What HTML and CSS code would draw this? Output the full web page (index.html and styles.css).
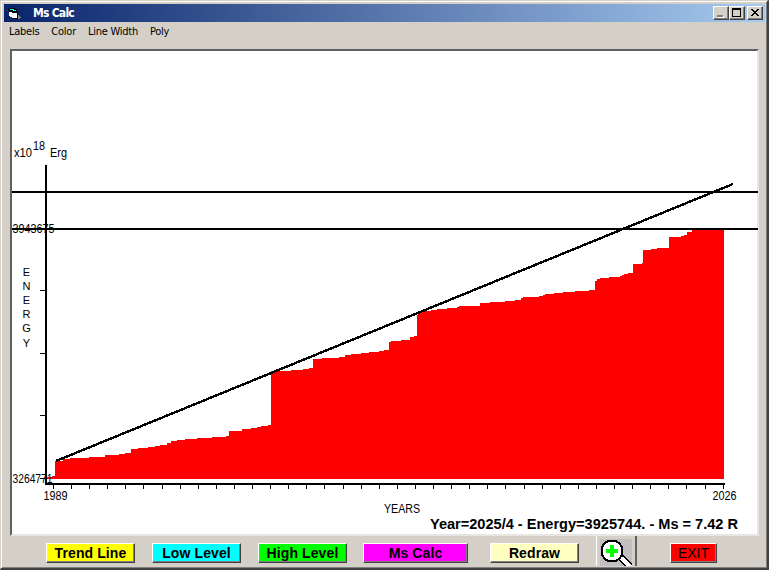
FILE: index.html
```
<!DOCTYPE html>
<html lang="en">
<head>
    <meta charset="UTF-8">
    <title>Ms Calc</title>
    <link rel="stylesheet" href="styles.css">
</head>
<body>
    <div class="window">
        <!-- Title bar -->
        <div class="title-bar">
            <svg class="app-icon" width="14" height="12" viewBox="0 0 14 12" shape-rendering="crispEdges">
                <path d="M0 1h2V0h5v1h2v9H4V9H2V8H1V3H0z" fill="#000"/>
                <path d="M2 1h4v1h2v1H5V2H2z" fill="#0ff"/>
                <path d="M1 3h3v1h5v6H4V9H2V8H1z" fill="#fff"/>
                <path d="M1 3h3v1h5v1H4V4H1zM9 3h1v8H5v-1h4z" fill="#000"/>
                <path d="M10 7h1v1h1v1h1v1h-1v1h-2z" fill="#808080"/>
            </svg>
            <span class="title">Ms Calc</span>
            <div class="controls">
                <button class="control" aria-label="Minimize">
                    <svg width="12" height="10" viewBox="0 0 12 10" shape-rendering="crispEdges"><path d="M3 8h6v2H3z" fill="#fff"/><path d="M2 7h6v2H2z" fill="#808080"/></svg>
                </button>
                <button class="control" aria-label="Maximize">
                    <svg width="12" height="10" viewBox="0 0 12 10" shape-rendering="crispEdges"><path d="M1 0h9v9H1zM2 2v6h7V2z" fill="#000" fill-rule="evenodd"/></svg>
                </button>
                <button class="control close" aria-label="Close">
                    <svg width="12" height="10" viewBox="0 0 12 10" shape-rendering="crispEdges"><path d="M2 1h2v1h1v1h2V2h1V1h2v1H9v1H8v1H7v1h1v1h1v1h1v1H8V7H7V6H5v1H4v1H2V7h1V6h1V5h1V4H4V3H3V2H2z" fill="#000"/></svg>
                </button>
            </div>
        </div>

        <!-- Menu -->
        <div class="menu">
            <span>Labels</span>
            <span>Color</span>
            <span>Line Width</span>
            <span>Poly</span>
        </div>

        <!-- Chart -->
        <div class="chart">
            <svg width="746" height="483" viewBox="12 51 746 483">
                <path class="area" d="M47 479V477H52V476H55V461H63V459H70V458H89V457H105V455H119V454H125V453H131V449H138V448H148V447H155V446H160V445H167V443H171V441H177V440H185V439H197V438H212V437H226V436H229V431H242V429H251V428H257V427H261V426H268V425H271V371H291V370H303V369H309V368H313V359H322V358H339V357H345V355H351V354H361V353H369V352H379V351H384V350H389V342H391V341H401V340H410V337H414V336H417V315H418V313H420V312H425V311H431V310H437V309H447V308H457V307H459V306H480V303H490V302H505V301H515V300H521V298H523V297H539V296H543V295H545V294H554V293H563V292H575V291H589V290H595V281H597V279H600V278H609V277H620V276H622V275H624V274H628V273H633V264H642V263H643V250H651V249H657V248H669V237H681V236H684V235H687V232H692V230H724V479Z"/>

                <path class="axis" d="M46 165V485M45 484H725"/>
                <path class="tick" d="M40 290.5H45M40 353.5H45M40 415.5H45M40 478.5H45"/>
                <g class="tick" id="year-ticks"></g>

                <path class="level" d="M12 192H758M12 229H758"/>
                <path class="trend" d="M56 461L733 184"/>

                <text x="14" y="157" textLength="18" lengthAdjust="spacingAndGlyphs">x10</text>
                <text x="33" y="150" textLength="12" lengthAdjust="spacingAndGlyphs">18</text>
                <text x="50" y="157" textLength="17" lengthAdjust="spacingAndGlyphs">Erg</text>
                <text x="12.5" y="233" textLength="42" lengthAdjust="spacingAndGlyphs">3943675</text>
                <text x="12.5" y="483" textLength="40" lengthAdjust="spacingAndGlyphs">3264771</text>
                <g class="axis-name">
                    <text x="26.5" y="276">E</text>
                    <text x="26.5" y="290">N</text>
                    <text x="26.5" y="304">E</text>
                    <text x="26.5" y="318">R</text>
                    <text x="26.5" y="332">G</text>
                    <text x="26.5" y="347">Y</text>
                </g>
                <text x="43.5" y="500" textLength="24" lengthAdjust="spacingAndGlyphs">1989</text>
                <text x="712.5" y="500" textLength="24" lengthAdjust="spacingAndGlyphs">2026</text>
                <text x="384" y="513" textLength="36" lengthAdjust="spacingAndGlyphs">YEARS</text>
                <text class="status" x="430" y="529" textLength="308" lengthAdjust="spacingAndGlyphs">Year=2025/4 - Energy=3925744. - Ms = 7.42 R</text>
            </svg>
        </div>

        <!-- Buttons -->
        <div class="toolbar">
            <button class="btn yellow">Trend Line</button>
            <button class="btn cyan">Low Level</button>
            <button class="btn green">High Level</button>
            <button class="btn magenta">Ms Calc</button>
            <button class="btn cream">Redraw</button>
            <button class="zoom" aria-label="Zoom in">
                <svg width="32" height="27" viewBox="0 0 32 27" shape-rendering="crispEdges">
                    <path d="M19 17L33 30" stroke="#000" stroke-width="7"/>
                    <path d="M19 17L33 30" stroke="#fff" stroke-width="4"/>
                    <circle cx="12" cy="12" r="10.5" fill="#fff" stroke="#000" stroke-width="2"/>
                    <path d="M10 6h4v4h4v4h-4v4h-4v-4H6v-4h4z" fill="#0f0"/>
                </svg>
            </button>
            <button class="btn exit">EXIT</button>
        </div>
    </div>

    <script>
        // One tick per year, 1989 - 2026
        const ticks = document.getElementById('year-ticks');
        for (let i = 0; i <= 37; i++) {
            const tick = document.createElementNS('http://www.w3.org/2000/svg', 'path');
            const x = Math.floor(53.4 + i * 18.1) + 0.5;
            tick.setAttribute('d', `M${x} 485V489`);
            ticks.appendChild(tick);
        }
    </script>
</body>
</html>
```
FILE: styles.css
```
* {
    box-sizing: border-box;
}

body {
    margin: 0;
    background: #d4d0c8;
    overflow: hidden;
}

button {
    padding: 0;
    margin: 0;
    border-radius: 0;
}

.window {
    width: 769px;
    height: 570px;
    padding: 2px;
    border: 1px solid #d4d0c8;
    border-right: 2px solid #404040;
    border-bottom: 2px solid #404040;
    box-shadow: inset 1px 1px 0 #fff, inset -1px -1px 0 #808080;
    background: #d4d0c8;
    display: flex;
    flex-direction: column;
}

/* Title bar */
.title-bar {
    height: 18px;
    flex-shrink: 0;
    margin: 1px 0 0 1px;
    padding: 0 2px 0 4px;
    display: flex;
    align-items: center;
    background: linear-gradient(to right, #0a246a, #a6caf0);
}

.app-icon {
    margin-top: 2px;
}

.title {
    margin-left: 11px;
    color: #fff;
    font: bold 12px Tahoma, "DejaVu Sans Condensed", "DejaVu Sans", sans-serif;
    letter-spacing: -0.75px;
}

.controls {
    margin-left: auto;
    display: flex;
}

.control {
    width: 16px;
    height: 14px;
    display: flex;
    background: #d4d0c8;
    border: 1px solid;
    border-color: #fff #404040 #404040 #fff;
    box-shadow: inset -1px -1px 0 #808080;
}

.control svg {
    margin: 1px;
}

.close {
    margin-left: 2px;
}

/* Menu */
.menu {
    height: 27px;
    flex-shrink: 0;
    padding: 3px 0 0 6px;
    display: flex;
    gap: 12px;
    font: 11px/14px Tahoma, "DejaVu Sans Condensed", "DejaVu Sans", sans-serif;
    letter-spacing: -0.25px;
    color: #000;
}

/* Chart */
.chart {
    width: 749px;
    height: 487px;
    flex-shrink: 0;
    margin-left: 7px;
    border: 2px solid;
    border-color: #606060 #e8e6e2 #e8e6e2 #606060;
    background: #fff;
}

.chart svg {
    display: block;
}

.chart text {
    font: 12px "Liberation Sans", Arial, sans-serif;
    fill: #000;
}

.chart .axis-name text {
    font-size: 11px;
    text-anchor: middle;
}

.chart .status {
    font-size: 14px;
    font-weight: bold;
}

.area {
    fill: #f00;
    shape-rendering: crispEdges;
}

.axis,
.level,
.trend {
    stroke: #000;
    stroke-width: 2;
    fill: none;
    shape-rendering: crispEdges;
}

.trend {
    stroke-width: 2.4;
}

.tick {
    stroke: #000;
    stroke-width: 1;
    shape-rendering: crispEdges;
}

/* Buttons */
.toolbar {
    height: 30px;
    flex-shrink: 0;
    padding-left: 43px;
    display: flex;
    align-items: flex-start;
}

.btn {
    width: 89px;
    height: 20px;
    margin: 7px 17px 0 0;
    border: 1px solid;
    border-color: #fff #404040 #404040 #fff;
    box-shadow: inset -1px -1px 0 #808080;
    font: bold 14px/17px "Liberation Sans", Arial, sans-serif;
    letter-spacing: 0.1px;
    color: #000;
}

.yellow {
    background: #ff0;
}

.cyan {
    background: #0ff;
}

.green {
    background: #0f0;
    margin-right: 16px;
}

.magenta {
    background: #f0f;
    width: 105px;
    margin-right: 22px;
}

.cream {
    background: #ffffc0;
}

.zoom {
    width: 41px;
    height: 30px;
    margin-right: 33px;
    padding-left: 3px;
    display: flex;
    border: 0;
    border-left: 1px solid #fff;
    border-right: 2px solid #606060;
    background: #d4d0c8;
}

.zoom svg {
    margin-top: 3px;
    background: #c0c0c0;
}

.exit {
    width: 47px;
    margin-right: 0;
    background: #f00;
    font-weight: normal;
    font-size: 14px;
    letter-spacing: 0;
}
```
